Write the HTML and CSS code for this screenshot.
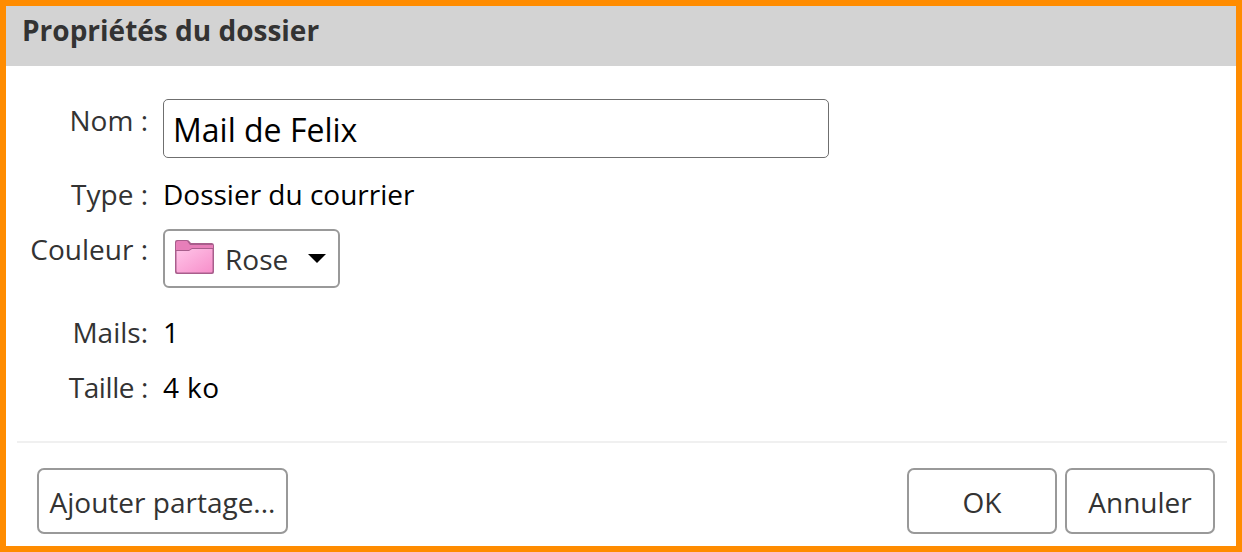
FILE: index.html
```html
<!DOCTYPE html>
<html lang="fr">
<head>
  <meta charset="UTF-8">
  <title>Propriétés du dossier</title>
  <link rel="stylesheet" href="styles.css">
</head>
<body>
  <div class="dialog">
    <div class="header">
      <h2>Propriétés du dossier</h2>
    </div>

    <div class="props">
      <label class="name" for="nom">Nom :</label>
      <div class="value"><input id="nom" type="text" value="Mail de Felix"></div>

      <div class="name name-type">Type :</div>
      <div class="value value-type">Dossier du courrier</div>

      <div class="name name-color">Couleur :</div>
      <div class="value">
        <div class="select">
          <svg class="folder" width="41" height="36" viewBox="0 0 41 36">
            <defs>
              <linearGradient id="pink" x1="0" y1="0" x2="1" y2="1">
                <stop offset="0" stop-color="#ffc4e8"/>
                <stop offset="1" stop-color="#f78fca"/>
              </linearGradient>
            </defs>
            <path d="M1 3 Q1 1 3 1 H13 Q15 1 16 3 L17 4 H38 Q40 4 40 6.5 V33 Q40 35 38 35 H3 Q1 35 1 33 Z" fill="#a85e8c"/>
            <path d="M2 4 Q2 2 4 2 H13 L16 6 H39 V9 H18 L15 11 H2 Z" fill="#e77fb9"/>
            <path d="M2.5 12 H15 L18 10 H38.5 V32 Q38.5 33.5 37 33.5 H4 Q2.5 33.5 2.5 32 Z" fill="url(#pink)"/>
          </svg>
          <span class="select-text">Rose</span>
          <span class="caret"></span>
        </div>
      </div>

      <div class="name name-mails">Mails:</div>
      <div class="value value-mails">1</div>

      <div class="name name-size">Taille :</div>
      <div class="value value-size">4 ko</div>
    </div>

    <div class="divider"></div>

    <div class="footer">
      <button class="btn btn-share">Ajouter partage...</button>
      <div class="footer-right">
        <button class="btn btn-main">OK</button>
        <button class="btn btn-main">Annuler</button>
      </div>
    </div>
  </div>
</body>
</html>
```

FILE: styles.css
```css
*{
  margin:0;
  padding:0;
  box-sizing: border-box;
}
body {
  font-family: 'Open Sans', 'Noto Sans', sans-serif;
  font-size: 28px;
  color: #333;
  background: #fff;
  overflow: hidden;
}
.dialog{
  width: 1242px;
  height: 552px;
  border: 6px solid #ff8c00;
  display: flex;
  flex-direction: column;
}
.header{
  height: 60px;
  background: #d3d3d3;
  padding: 0 0 13px 16px;
  display: flex;
  align-items: center;
}
h2{
  font-size: 28px;
  font-weight: 700;
  color: #333;
}
.props{
  display: grid;
  grid-template-columns: 142px 1fr;
  grid-template-rows: 59px 71px 59px 55px 55px;
  column-gap: 15px;
  margin-top: 33px;
}
.name{
  text-align: right;
  line-height: 42px;
}
.value{
  color: #000;
  line-height: 42px;
}
.name-type, .value-type{
  padding-top: 15px;
}
.name-color{
  margin-top: -1px;
}
.name-mails, .value-mails, .name-size, .value-size{
  padding-top: 23px;
}
.name-size{
  letter-spacing: -0.4px;
}
.value-size{
  letter-spacing: 0.4px;
}
input{
  display: block;
  width: 666px;
  height: 59px;
  border: 1.5px solid #6f6f6f;
  border-radius: 5px;
  padding: 1px 9px 0;
  font: inherit;
  font-size: 32px;
  color: #000;
  outline: none;
}
.select{
  width: 177px;
  height: 59px;
  border: 2px solid #999;
  border-radius: 6px;
  display: flex;
  align-items: center;
  padding-left: 9px;
  color: #333;
}
.folder{
  flex: none;
  margin-top: -3px;
}
.select-text{
  margin-left: 10px;
}
.caret{
  width: 0;
  height: 0;
  margin-left: 20px;
  border-left: 9px solid transparent;
  border-right: 9px solid transparent;
  border-top: 9px solid #000;
}
.divider{
  height: 2px;
  background: #f0f0f0;
  margin: 43px 9px 0 11px;
}
.footer{
  display: flex;
  justify-content: space-between;
  padding: 25px 21px 0 31px;
}
.footer-right{
  display: flex;
  gap: 8px;
}
.btn{
  height: 66px;
  padding-top: 2px;
  background: #fff;
  border: 2px solid #999;
  border-radius: 7px;
  font: inherit;
  color: #333;
}
.btn-share{
  width: 251px;
}
.btn-main{
  width: 150px;
}
```
